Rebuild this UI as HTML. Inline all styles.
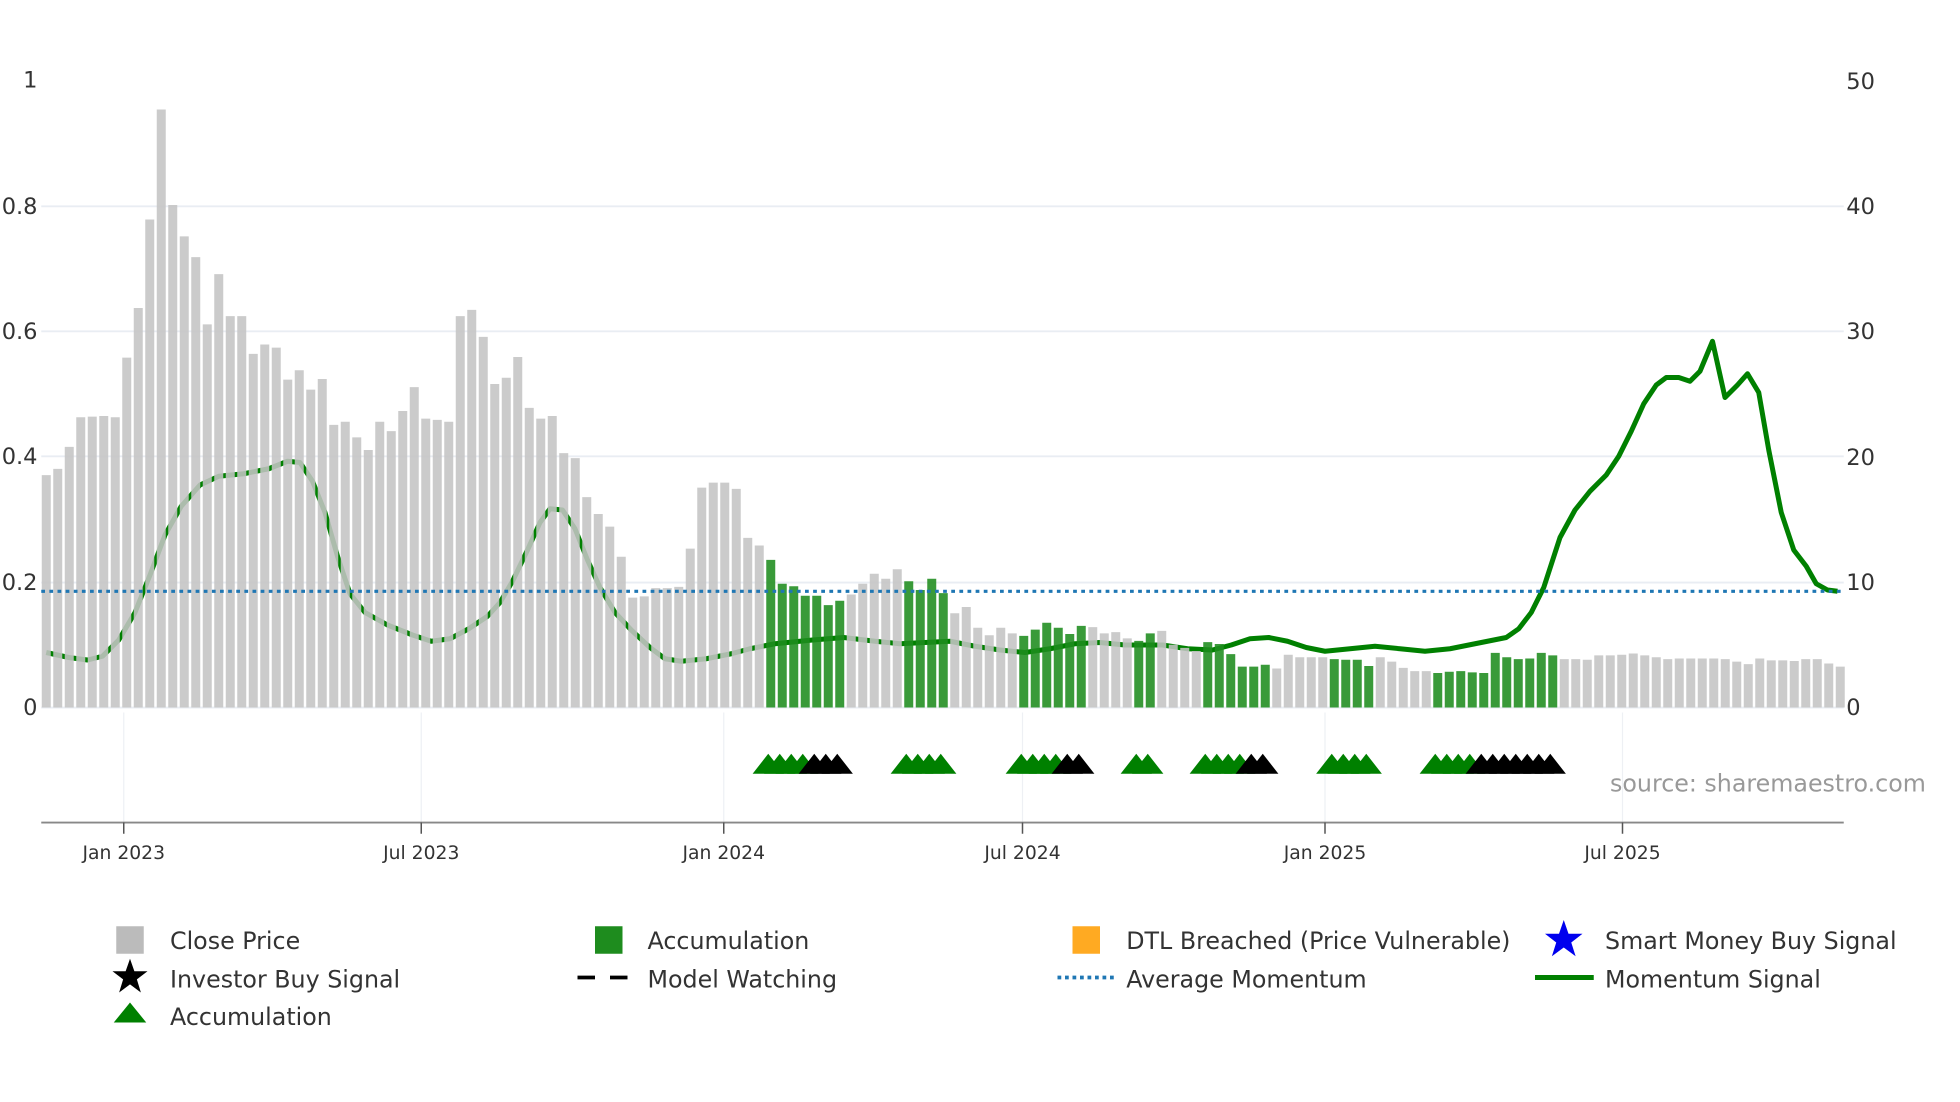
<!DOCTYPE html>
<html><head><meta charset="utf-8"><style>
html,body{margin:0;padding:0;background:#fff;}
svg{display:block;}
text{font-family:"DejaVu Sans","Liberation Sans",sans-serif;}
</style></head><body>
<svg id="s" width="1960" height="1102" viewBox="0 0 1568 881.6" xmlns="http://www.w3.org/2000/svg">
<g id="grid" stroke="#e9edf3" stroke-width="1.5">
<line x1="33" x2="1475" y1="165" y2="165"/><line x1="33" x2="1475" y1="265" y2="265"/>
<line x1="33" x2="1475" y1="365" y2="365"/><line x1="33" x2="1475" y1="466" y2="466"/>
<line x1="33" x2="1475" y1="566" y2="566"/>
</g>
<g stroke="#eef0f4" stroke-width="1">
<line x1="99" x2="99" y1="570" y2="658"/><line x1="337" x2="337" y1="570" y2="658"/>
<line x1="579" x2="579" y1="570" y2="658"/><line x1="818" x2="818" y1="570" y2="658"/>
<line x1="1060" x2="1060" y1="570" y2="658"/><line x1="1298" x2="1298" y1="570" y2="658"/>
</g>
<path id="mom" fill="none" stroke="#008000" stroke-width="4" stroke-linejoin="round"/>
<g id="bars"></g>
<line x1="33" x2="1475" y1="473" y2="473" stroke="#1f77b4" stroke-width="2.5" stroke-dasharray="3,3.5"/>
<g id="tri"></g>
<line x1="33" x2="1475" y1="658" y2="658" stroke="#888" stroke-width="1.5"/>
<g stroke="#555" stroke-width="1.2">
<line x1="99" x2="99" y1="658" y2="667"/><line x1="337" x2="337" y1="658" y2="667"/>
<line x1="579" x2="579" y1="658" y2="667"/><line x1="818" x2="818" y1="658" y2="667"/>
<line x1="1060" x2="1060" y1="658" y2="667"/><line x1="1298" x2="1298" y1="658" y2="667"/>
</g>
<g font-size="18" fill="#333" text-anchor="end">
<text x="30" y="70">1</text><text x="30" y="171">0.8</text><text x="30" y="271">0.6</text>
<text x="30" y="371">0.4</text><text x="30" y="472">0.2</text><text x="30" y="572">0</text>
</g>
<g font-size="18" fill="#333">
<text x="1477" y="71">50</text><text x="1477" y="171">40</text><text x="1477" y="271">30</text>
<text x="1477" y="372">20</text><text x="1477" y="472">10</text><text x="1477" y="572">0</text>
</g>
<g font-size="15" fill="#333" text-anchor="middle">
<text x="99" y="687">Jan 2023</text><text x="337" y="687">Jul 2023</text><text x="579" y="687">Jan 2024</text>
<text x="818" y="687">Jul 2024</text><text x="1060" y="687">Jan 2025</text><text x="1298" y="687">Jul 2025</text>
</g>
<text x="1288" y="633" font-size="19" fill="#999">source: sharemaestro.com</text>
<g font-size="19" fill="#333">
<rect x="93" y="741" width="22" height="22" fill="#bbb"/><text x="136" y="759">Close Price</text>
<polygon points="104,767 107.5,777 118,777 109.5,783.5 112.7,794 104,787.5 95.3,794 98.5,783.5 90,777 100.5,777" fill="#000"/><text x="136" y="790">Investor Buy Signal</text>
<polygon points="91,818 104,802 117,818" fill="#008000"/><text x="136" y="820">Accumulation</text>
<rect x="476" y="741" width="22" height="22" fill="#1e8c1e"/><text x="518" y="759">Accumulation</text>
<line x1="462" x2="507" y1="782" y2="782" stroke="#000" stroke-width="3" stroke-dasharray="14,12"/><text x="518" y="790">Model Watching</text>
<rect x="858" y="741" width="22" height="22" fill="#ffaa22"/><text x="901" y="759">DTL Breached (Price Vulnerable)</text>
<line x1="846" x2="891" y1="782" y2="782" stroke="#1f77b4" stroke-width="3" stroke-dasharray="3,3"/><text x="901" y="790">Average Momentum</text>
<polygon points="1251,736 1254.8,747 1266,747 1257,754 1260.5,765 1251,758 1241.5,765 1245,754 1236,747 1247.2,747" fill="#0000ee"/><text x="1284" y="759">Smart Money Buy Signal</text>
<line x1="1228" x2="1275" y1="782" y2="782" stroke="#008000" stroke-width="4"/><text x="1284" y="790">Momentum Signal</text>
</g>
</svg>
<script>
var v=[.37,.38,.415,.462,.463,.464,.462,.557,.636,.777,.952,.80,.75,.717,.61,.69,.623,.623,.563,.578,.573,.522,.537,.506,.523,.45,.455,.43,.41,.455,.44,.472,.51,.46,.458,.455,.623,.633,.59,.515,.525,.558,.477,.46,.464,.405,.397,.335,.308,.288,.24,.175,.177,.19,.19,.192,.253,.35,.358,.358,.348,.27,.258,.235,.197,.193,.178,.178,.163,.17,.18,.197,.213,.205,.22,.201,.187,.205,.182,.15,.16,.127,.115,.127,.118,.114,.124,.135,.127,.117,.13,.128,.118,.12,.11,.106,.118,.122,.1,.095,.09,.104,.101,.085,.065,.065,.068,.062,.084,.08,.08,.08,.077,.076,.076,.066,.08,.073,.063,.058,.058,.055,.057,.058,.056,.055,.087,.08,.077,.078,.087,.083,.077,.077,.076,.083,.083,.084,.086,.083,.08,.077,.078,.078,.078,.078,.077,.073,.069,.078,.075,.075,.074,.077,.077,.07,.065];
var G=[[63,69],[75,78],[85,90],[95,96],[101,106],[112,115],[121,131]];
function isG(i){for(var k=0;k<G.length;k++)if(i>=G[k][0]&&i<=G[k][1])return true;return false;}
var b=document.getElementById("bars"),h="";
for(var i=0;i<v.length;i++){var x=37+9.2*i,y=566-v[i]*502.5;
h+='<rect x="'+(x-3.6).toFixed(1)+'" y="'+y.toFixed(1)+'" width="7.2" height="'+(566-y).toFixed(1)+'" fill="'+(isG(i)?'#1e8c1e':'#c4c4c4')+'" opacity="'+(isG(i)?0.88:0.88)+'"/>';}
b.innerHTML=h;
var p=[[37,522],[55,526],[70,528],[82,525],[95,512],[108,490],[120,460],[132,428],[145,405],[160,388],[175,381],[195,379],[215,375],[230,369],[240,370],[250,385],[260,410],[270,445],[280,475],[292,490],[310,500],[330,508],[345,513],[360,511],[375,503],[390,493],[400,482],[410,465],[422,440],[432,418],[440,407],[450,408],[460,423],[470,448],[480,470],[492,490],[505,504],[520,518],[532,527],[545,529],[565,527],[585,523],[600,519],[620,515],[650,512],[675,510],[700,513],[720,515],[740,514],[760,513],[780,517],[800,520],[820,522],[840,519],[860,515],[880,514],[900,516],[930,516],[950,519],[970,520],[985,516],[1000,511],[1015,510],[1030,513],[1045,518],[1060,521],[1080,519],[1100,517],[1120,519],[1140,521],[1160,519],[1180,515],[1205,510],[1215,503],[1225,490],[1235,470],[1248,430],[1260,408],[1272,393],[1285,380],[1295,365],[1305,345],[1315,323],[1325,308],[1333,302],[1343,302],[1352,305],[1360,297],[1370,273],[1380,318],[1390,308],[1398,299],[1407,314],[1415,360],[1425,410],[1435,440],[1445,453],[1453,467],[1462,472],[1470,473]];
document.getElementById("mom").setAttribute("d","M"+p.map(function(q){return q.join(",")}).join(" L"));
var T=[[63,66,'#008000'],[67,69,'#000'],[75,78,'#008000'],[85,88,'#008000'],[89,90,'#000'],[95,96,'#008000'],[101,104,'#008000'],[105,106,'#000'],[112,115,'#008000'],[121,124,'#008000'],[125,131,'#000']];
var t="";T.forEach(function(g){for(var i=g[0];i<=g[1];i++){var x=37+9.2*i-2;t+='<polygon points="'+(x-12.5)+',619 '+x+',603 '+(x+12.5)+',619" fill="'+g[2]+'"/>';}});
document.getElementById("tri").innerHTML=t;
</script>
</body></html>
